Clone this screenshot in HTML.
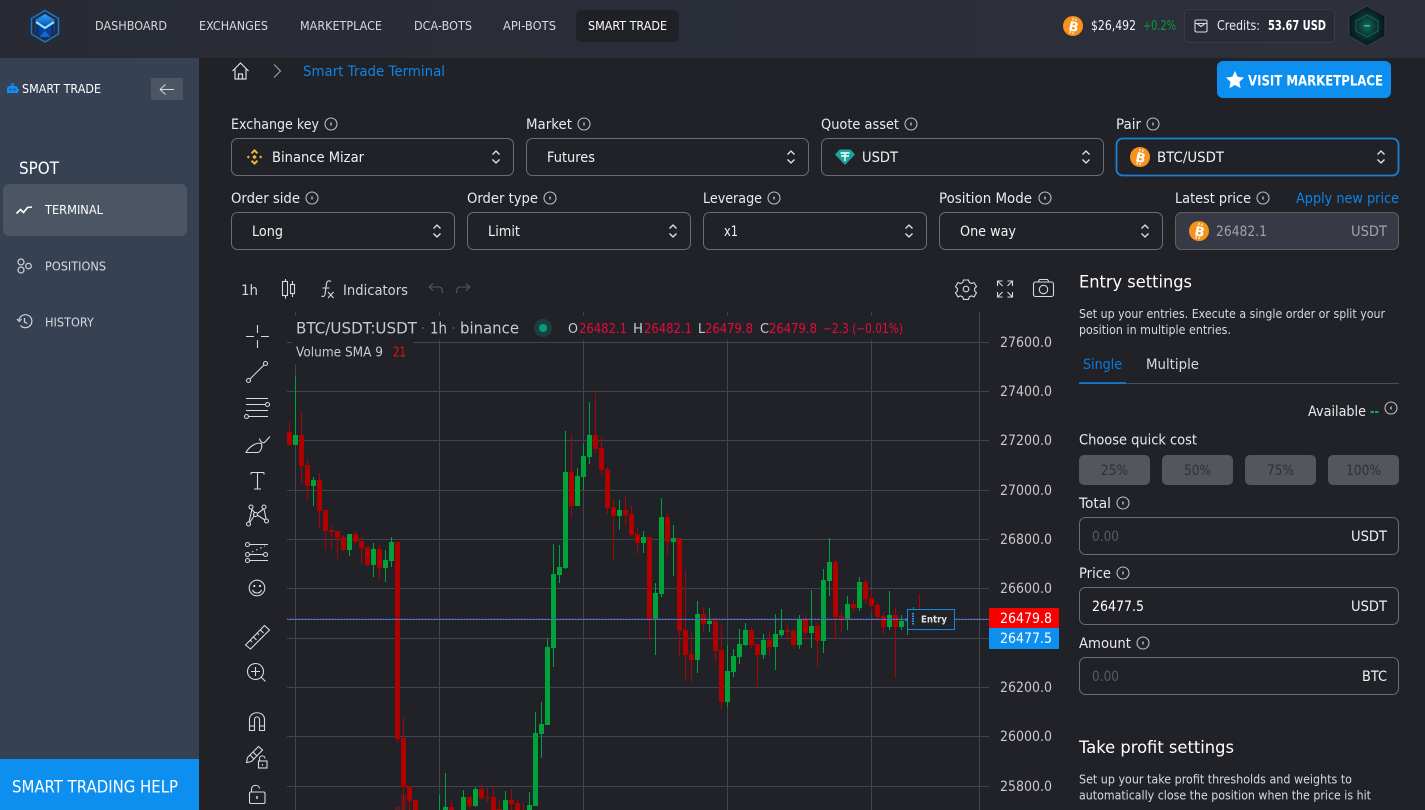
<!DOCTYPE html>
<html lang="en"><head><meta charset="utf-8"><title>Smart Trade Terminal</title>
<style>
html,body{margin:0;padding:0;background:#212228;width:1425px;height:810px;overflow:hidden}
svg{display:block}
text{font-family:"DejaVu Sans","Liberation Sans",sans-serif;font-size:14.5px;fill:#e8eaee;white-space:pre}
.ln{stroke:#6a6d76;fill:none;stroke-width:1}
.ic{fill:none;stroke:#d8dae0;stroke-width:1.1}
.nav{font-size:12.5px;fill:#d6d9de}
.side{font-size:12.5px;fill:#d6d9de}
.sel{font-size:14.5px;fill:#f0f1f4}
.lg{font-size:13.5px;fill:#e8083a}
.lk{font-size:13.5px;fill:#c8cad0}
.ax{font-size:14px;fill:#c8c8cc}
.sm{font-size:12.5px;fill:#d6d9de}
.q{font-size:14px;fill:#2f3138}
.ph{fill:#565c69}
</style></head><body>
<svg width="1425" height="810" viewBox="0 0 1425 810" xmlns="http://www.w3.org/2000/svg">
<defs>
<linearGradient id="hd" x1="0" x2="1" y1="0" y2="0"><stop offset="0" stop-color="#282b34"/><stop offset="1" stop-color="#2d303b"/></linearGradient>
<radialGradient id="av"><stop offset="0" stop-color="#126a5a"/><stop offset=".5" stop-color="#0a3533"/><stop offset="1" stop-color="#09161b"/></radialGradient>
<linearGradient id="lgb" x1="0" x2="0" y1="0" y2="1"><stop offset="0" stop-color="#2ea6ff"/><stop offset="1" stop-color="#0a4fb0"/></linearGradient>
<g id="i"><circle r="6" fill="none" stroke="#bcbec4" stroke-width="1.1"/><rect x="-.7" y="-1.5" width="1.4" height="3" fill="#bcbec4"/></g>
<g id="c"><path d="M-3.5-2.5 0-6l3.5 3.5M-3.5 2.5 0 6l3.5-3.5" fill="none" stroke="#e5e7eb" stroke-width="1.3"/></g>
<g id="b"><circle r="10" fill="#f7931a"/><g transform="rotate(12)"><text x="-4.2" y="5" style="font-size:13px;font-weight:700;fill:#fff">B</text><path d="M-1.5-8v2.5M1.5-8v2.5M-1.5 5.5V8M1.5 5.5V8" stroke="#fff" stroke-width="1.1"/></g></g>
</defs>

<rect width="1425" height="810" fill="#212228"/>

<!-- chart grid -->
<g stroke="#42434f" stroke-width="1" shape-rendering="crispEdges">
<path d="M287 342.5H989M287 391.5H989M287 440.5H989M287 490.5H989M287 539.5H989M287 588.5H989M287 638.5H989M287 687.5H989M287 736.5H989M287 786.5H989"/>
<path d="M295.5 312V810M439.5 312V810M583.5 312V810M727.5 312V810M871.5 312V810M979.5 312V810"/>
</g>
<!-- volume -->
<g fill="#5a1a20" shape-rendering="crispEdges"><rect x="401" y="795" width="5" height="15"/><rect x="395" y="807" width="5" height="3"/></g>
<!-- wicks -->
<path shape-rendering="crispEdges" fill="none" stroke="#00a33a" stroke-width="1" d="M295.5 376V445M313.5 477V506M349.5 534V556M373.5 543V577M385.5 550V582M391.5 537V567M439.5 795V810M445.5 773V810M463.5 790V810M475.5 787V807M505.5 791V810M529.5 792V810M535.5 712V806M541.5 702V758M547.5 638V725M553.5 544V667M559.5 545V583M565.5 431V569M577.5 468V506M583.5 444V490M589.5 402V464M619.5 500V530M643.5 531V553M655.5 583V655M661.5 498V597M673.5 525V576M697.5 601V673M709.5 608V632M727.5 645V707M733.5 649V677M739.5 629V664M745.5 623V646M763.5 634V659M775.5 614V670M781.5 609V637M799.5 615V649M811.5 590V648M823.5 569V653M829.5 538V596M847.5 596V630M859.5 577V611M889.5 591V630M901.5 615V630M907.5 618V635M913.5 607V620"/>
<path shape-rendering="crispEdges" fill="none" stroke="#b00000" stroke-width="1" d="M289.5 422V446M301.5 412V483M307.5 459V500M319.5 473V528M325.5 510V550M331.5 525V550M337.5 531V559M343.5 535V551M355.5 531V544M361.5 535V564M367.5 547V566M379.5 545V580M397.5 542V743M403.5 718V810M409.5 786V810M415.5 800V810M451.5 800V810M469.5 797V809M481.5 783V800M487.5 788V802M493.5 786V810M499.5 801V810M511.5 789V810M517.5 800V810M523.5 802V810M571.5 435V518M595.5 393V452M601.5 437V476M607.5 467V514M613.5 499V560M625.5 496V526M631.5 506V537M637.5 528V554M649.5 537V638M667.5 514V556M679.5 538V657M685.5 570V680M691.5 631V682M703.5 607V631M715.5 617V662M721.5 625V709M751.5 628V649M757.5 644V688M769.5 631V655M787.5 624V641M793.5 629V649M805.5 614V640M817.5 622V666M835.5 559V641M841.5 611V632M853.5 600V612M865.5 579V604M871.5 590V611M877.5 602V619M883.5 612V635M895.5 607V678M919.5 594V619"/>
<!-- bodies -->
<path shape-rendering="crispEdges" fill="none" stroke="#00a33a" stroke-width="5" d="M295.5 435V445M313.5 480V486M349.5 534V550M373.5 549V565M385.5 560V568M391.5 542V561M445.5 807V810M463.5 797V810M475.5 789V806M505.5 800V810M529.5 805V810M535.5 733V806M541.5 724V734M547.5 647V725M553.5 574V648M559.5 567V575M565.5 472V568M577.5 476V506M583.5 456V477M589.5 435V457M619.5 510V516M643.5 537V543M655.5 593V619M661.5 517V594M673.5 538V542M697.5 614V660M709.5 621V624M727.5 671V702M733.5 656V672M739.5 644V657M745.5 630V645M763.5 640V655M775.5 634V647M781.5 630V635M799.5 619V645M811.5 626V633M823.5 580V641M829.5 562V581M847.5 604V619M859.5 582V608M889.5 615V627M901.5 621V627M907.5 618V621"/>
<path shape-rendering="crispEdges" fill="none" stroke="#b00000" stroke-width="5" d="M289.5 432V445M301.5 435V466M307.5 465V486M319.5 480V511M325.5 510V531M331.5 530V532M337.5 531V538M343.5 537V550M355.5 534V542M361.5 541V548M367.5 547V565M379.5 549V568M397.5 542V739M403.5 738V787M409.5 786V801M415.5 800V810M451.5 807V810M469.5 797V806M481.5 789V798M487.5 797V798M493.5 797V810M499.5 809V810M511.5 800V804M517.5 803V810M571.5 472V506M595.5 435V449M601.5 448V470M607.5 469V508M613.5 507V516M625.5 510V515M631.5 514V535M637.5 534V543M649.5 537V619M667.5 517V542M679.5 538V631M685.5 630V655M691.5 654V660M703.5 614V624M715.5 621V651M721.5 650V702M751.5 630V645M757.5 644V655M769.5 640V647M787.5 630V632M793.5 631V645M805.5 619V633M817.5 626V641M835.5 562V617M841.5 616V619M853.5 604V608M865.5 582V599M871.5 598V606M877.5 605V617M883.5 616V627M895.5 615V627"/>
<!-- price lines -->
<path d="M287 618.5H989" stroke="#f00" stroke-width="1" stroke-dasharray="1 2" shape-rendering="crispEdges"/>
<path d="M287 619.5H989" stroke="#1587e0" stroke-width="1" shape-rendering="crispEdges"/>

<!-- legend masks -->
<rect x="292" y="316" width="612" height="24" fill="#212228"/>
<rect x="292" y="340" width="121" height="24" fill="#212228"/>
<rect x="287" y="316" width="5" height="25" fill="#212228"/>
<text x="296" y="333.5" textLength="121" lengthAdjust="spacingAndGlyphs" style="font-size:16px;fill:#c8cad0">BTC/USDT:USDT</text>
<text x="430" y="333.5" textLength="17" lengthAdjust="spacingAndGlyphs" style="font-size:16px;fill:#c8cad0">1h</text>
<text x="460" y="333.5" textLength="59" lengthAdjust="spacingAndGlyphs" style="font-size:16px;fill:#c8cad0">binance</text>
<circle cx="423" cy="328" r="1" fill="#555"/><circle cx="453.5" cy="328" r="1" fill="#555"/>
<circle cx="543" cy="328" r="9" fill="#089981" opacity=".25"/><circle cx="543" cy="328" r="4" fill="#089981"/>
<text class="lk" x="568" y="333" textLength="10" lengthAdjust="spacingAndGlyphs">O</text>
<text class="lg" x="579" y="333" textLength="48" lengthAdjust="spacingAndGlyphs">26482.1</text>
<text class="lk" x="633" y="333" textLength="10" lengthAdjust="spacingAndGlyphs">H</text>
<text class="lg" x="644" y="333" textLength="48" lengthAdjust="spacingAndGlyphs">26482.1</text>
<text class="lk" x="698" y="333" textLength="7" lengthAdjust="spacingAndGlyphs">L</text>
<text class="lg" x="705" y="333" textLength="48" lengthAdjust="spacingAndGlyphs">26479.8</text>
<text class="lk" x="760" y="333" textLength="9" lengthAdjust="spacingAndGlyphs">C</text>
<text class="lg" x="769" y="333" textLength="48" lengthAdjust="spacingAndGlyphs">26479.8</text>
<text class="lg" x="823" y="333" textLength="80" lengthAdjust="spacingAndGlyphs">−2.3 (−0.01%)</text>
<text x="296" y="356.5" textLength="87" lengthAdjust="spacingAndGlyphs" style="font-size:13px;fill:#c8cad0">Volume SMA 9</text>
<text x="393" y="356.5" textLength="13" lengthAdjust="spacingAndGlyphs" style="font-size:13.5px;fill:#e8101c">21</text>

<!-- axis -->
<text class="ax" x="1000" y="347" textLength="52" lengthAdjust="spacingAndGlyphs">27600.0</text>
<text class="ax" x="1000" y="396" textLength="52" lengthAdjust="spacingAndGlyphs">27400.0</text>
<text class="ax" x="1000" y="445" textLength="52" lengthAdjust="spacingAndGlyphs">27200.0</text>
<text class="ax" x="1000" y="495" textLength="52" lengthAdjust="spacingAndGlyphs">27000.0</text>
<text class="ax" x="1000" y="544" textLength="52" lengthAdjust="spacingAndGlyphs">26800.0</text>
<text class="ax" x="1000" y="593" textLength="52" lengthAdjust="spacingAndGlyphs">26600.0</text>
<text class="ax" x="1000" y="692" textLength="52" lengthAdjust="spacingAndGlyphs">26200.0</text>
<text class="ax" x="1000" y="741" textLength="52" lengthAdjust="spacingAndGlyphs">26000.0</text>
<text class="ax" x="1000" y="791" textLength="52" lengthAdjust="spacingAndGlyphs">25800.0</text>
<rect x="989" y="608" width="70" height="20" fill="#f80000"/>
<rect x="989" y="628" width="70" height="21" fill="#0d8ff0"/>
<text x="1000" y="623" textLength="52" lengthAdjust="spacingAndGlyphs" style="font-size:14px;fill:#fff">26479.8</text>
<text x="1000" y="643" textLength="52" lengthAdjust="spacingAndGlyphs" style="font-size:14px;fill:#fff">26477.5</text>
<!-- entry -->
<rect x="907.5" y="609.5" width="47" height="20" fill="#212228" stroke="#1587e0"/>
<path d="M913 613V625" stroke="#1d9bf5" stroke-width="2" stroke-dasharray="1.5 1" shape-rendering="crispEdges"/>
<text x="921" y="622.5" textLength="26" lengthAdjust="spacingAndGlyphs" style="font-size:10px;font-weight:700;fill:#e0e0e0">Entry</text>

<!-- chart toolbar -->
<text x="241" y="295" textLength="17" lengthAdjust="spacingAndGlyphs" style="fill:#d1d4dc">1h</text>
<g class="ic"><path d="M285.500 279v2M285.500 296v2.500M292.500 281v3M292.500 294v3"/><rect x="282.500" y="281.500" width="5" height="14"/><rect x="290.500" y="284.500" width="4" height="9"/></g>
<g class="ic"><path d="M331 281.500c-2-1.500-4-.5-4.500 2l-1.500 11c-.5 2-2 2.500-3.500 1.500M322.500 288h7M328 292l5.500 6M333.500 292l-5.500 6"/></g>
<text x="343" y="295" textLength="65" lengthAdjust="spacingAndGlyphs" style="fill:#d1d4dc">Indicators</text>
<g fill="none" stroke="#55575f" stroke-width="1.100"><path d="M429 287h10c2.500 0 3.500 2 3.500 6M429 287l4-3.500M429 287l4 3.500"/><path d="M470 287h-10c-2.500 0-3.500 2-3.500 6M470 287l-4-3.500M470 287l-4 3.500"/></g>
<g class="ic"><circle cx="966" cy="289" r="2.800"/><path d="M963.500 280h5l.8 2.500 2.200 1 2.500-1 2.500 4.200-1.900 1.800v2.400l1.900 1.800-2.500 4.200-2.500-1-2.200 1-.8 2.500h-5l-.8-2.500-2.200-1-2.500 1-2.500-4.200 1.900-1.800v-2.400l-1.900-1.800 2.500-4.200 2.500 1 2.200-1z"/></g>
<g class="ic"><path d="M997.500 286v-5h5M997.500 281l5 5M1012.500 286v-5h-5M1012.500 281l-5 5M997.500 292v5h5M997.500 297l5-5M1012.500 292v5h-5M1012.500 297l-5-5"/></g>
<g class="ic"><rect x="1033.500" y="282" width="20" height="14.500" rx="2"/><path d="M1038 282l1.500-2.500h8l1.500 2.500"/><circle cx="1043.500" cy="289.500" r="4.200"/></g>

<!-- left tools -->
<g class="ic">
<path d="M246 336.500h8M261 336.500h8M257.500 325v8M257.500 340v8"/>
<circle cx="248.500" cy="380.500" r="2"/><circle cx="265.500" cy="363.500" r="2"/><path d="M250 379l14-14"/>
<path d="M246 398.500h22M246 404.500h19M246 410.500h22M249 416.500h19"/><circle cx="267.500" cy="404.500" r="2"/><circle cx="246.500" cy="416.500" r="2"/>
<path d="M246 452.500h12c3-1 4.500-6 3.500-9-3-1-6 0-9 2-3 2-5 4-6.500 7z"/><path d="M259.500 438.500c.5 3 3 5 5 4l5.500-6"/>
<path d="M251 472.500h13M257.500 472.500v16.500M254 489h7M251 472.500v2M264 472.500v2"/>
<circle cx="251" cy="507" r="2"/><circle cx="264" cy="507" r="2"/><circle cx="248.500" cy="524" r="2"/><circle cx="266.500" cy="521" r="2"/><circle cx="255.500" cy="514.500" r="2"/>
<path d="M251.500 509l3.500 4M263.500 509l-6 4.500M250 522l4-6M257 515l8 5M252 509l-3 13M264 509l2 10"/>
<circle cx="247.500" cy="544.500" r="2"/><path d="M250 544.500h18"/>
<circle cx="247.500" cy="554.500" r="2"/><circle cx="265.500" cy="554.500" r="2"/><path d="M250 554.500h13"/>
<circle cx="247.500" cy="560.500" r="2"/><path d="M250 560.500h18"/>
<path d="M252 552l13-6" stroke-dasharray="1.500 3"/>
<circle cx="257" cy="588" r="7.800"/><circle cx="254.300" cy="586" r=".6"/><circle cx="260" cy="586" r=".6"/><path d="M252.500 590c1.500 4 7.500 4 9 0"/>
<path d="M245.500 645l19-19.500 5 4.500-19 19zM250 640l2 2M253.500 637l3 3M257 633l2 2M260.500 630l3 3"/>
<circle cx="255.500" cy="671.500" r="8"/><path d="M251 671.500h9M255.500 667v9M261.500 677.500l4 4"/>
<path d="M249.500 730.500v-11c0-9 15-9 15 0v11h-5v-11c0-3.500-5-3.500-5 0v11zM249.500 726h5M259.500 726h5"/>
<path d="M246.500 762.500l1-5 11-11 4 3.500-11 11.500zM250 755l4 4M253 752l4 4"/><rect x="258.500" y="761" width="8.500" height="7"/><path d="M259.500 761v-2.500c0-3.500 5.500-3.500 5.500 0"/><path d="M262.500 764v1.500"/>
<rect x="249.500" y="792" width="15.500" height="11.500" rx="1.500"/><path d="M251.500 792v-3c0-4.500 7.500-5 8-.5"/><path d="M257 796v3" stroke-width="1.500"/>
</g>

<!-- header -->
<rect width="1425" height="58" fill="url(#hd)"/>
<path d="M45 10.500 58.500 18.500V34L45 42 31.500 34V18.500z" fill="none" stroke="#1478d8" stroke-width="1.500"/>
<path d="M45 14 55 20v12l-10 6-10-6V20z" fill="#0a3f9c"/>
<path d="M45 14 55 20 45 27 35 20z" fill="url(#lgb)"/>
<path d="M36 22l9 6 9-6" fill="none" stroke="#8feaff" stroke-width="2"/>
<path d="M37.500 25v8M52.500 25v8" stroke="#0b2c66" stroke-width="2"/>
<path d="M39.500 37l5.500-6 5.500 6z" fill="#1268d8"/>
<rect x="576" y="10" width="103" height="32" rx="6" fill="#202127"/>
<text class="nav" x="95" y="30" textLength="72" lengthAdjust="spacingAndGlyphs">DASHBOARD</text>
<text class="nav" x="199" y="30" textLength="69" lengthAdjust="spacingAndGlyphs">EXCHANGES</text>
<text class="nav" x="300" y="30" textLength="82" lengthAdjust="spacingAndGlyphs">MARKETPLACE</text>
<text class="nav" x="414" y="30" textLength="58" lengthAdjust="spacingAndGlyphs">DCA-BOTS</text>
<text class="nav" x="503" y="30" textLength="53" lengthAdjust="spacingAndGlyphs">API-BOTS</text>
<text class="nav" x="588" y="30" textLength="79" lengthAdjust="spacingAndGlyphs" style="fill:#fff">SMART TRADE</text>
<use href="#b" x="1073" y="26"/>
<text x="1091" y="30" textLength="45" lengthAdjust="spacingAndGlyphs" style="font-size:13.5px;fill:#f4f4f4">$26,492</text>
<text x="1143" y="30" textLength="33" lengthAdjust="spacingAndGlyphs" style="font-size:13.5px;fill:#089c3a">+0.2%</text>
<rect x="1184.500" y="9.500" width="150" height="33" rx="4" fill="#292c36" stroke="#3a3d48"/>
<g class="ic"><rect x="1195" y="20" width="12" height="12" rx="1.500"/><path d="M1195 23.500h12M1197 23.500l4 3 4-3"/></g>
<text x="1217" y="30" textLength="43" lengthAdjust="spacingAndGlyphs" style="font-size:13px">Credits:</text>
<text x="1268" y="30" textLength="58" lengthAdjust="spacingAndGlyphs" style="font-size:13px;font-weight:700;fill:#fff">53.67 USD</text>
<path d="M1367 6l18 10v20l-18 10-18-10V16z" fill="url(#av)" stroke="#3a3f48"/>
<path d="M1367 15l11 6v10l-11 6-11-6V21z" fill="none" stroke="#14705c" stroke-width=".8"/>
<rect x="1364" y="25" width="6" height="1.500" fill="#25c49c"/>

<!-- sidebar -->
<rect x="0" y="58" width="199" height="701" fill="#364154"/>
<path d="M7 93v-4c0-2 1.500-3 3-3h1.500v-1.200h-.7v-1.300h3.400v1.300h-.7V86H15c1.500 0 3 1 3 3l1 0v2l-1 0v2z" fill="#0d8ff0"/>
<circle cx="10.500" cy="89.500" r="1" fill="#364154"/><circle cx="14.500" cy="89.500" r="1" fill="#364154"/>
<text x="22" y="93" textLength="79" lengthAdjust="spacingAndGlyphs" style="font-size:12.500px;fill:#fff">SMART TRADE</text>
<rect x="151" y="78" width="32" height="22" fill="#4b5563"/>
<path d="M174 89.500h-14M160 89.500l5.500-5M160 89.500l5.500 5" fill="none" stroke="#d8dae0" stroke-width="1"/>
<text x="19" y="174" textLength="40" lengthAdjust="spacingAndGlyphs" style="font-size:16.500px;fill:#fff">SPOT</text>
<rect x="3" y="184" width="184" height="52" rx="6" fill="#4b5563"/>
<path d="M16.500 213.500l4-4 3 3 4-5 4.500 -.5" fill="none" stroke="#fff" stroke-width="1.600"/>
<text class="side" x="45" y="214" textLength="58" lengthAdjust="spacingAndGlyphs" style="fill:#fff">TERMINAL</text>
<g fill="none" stroke="#d1d5db" stroke-width="1.200"><circle cx="21" cy="262" r="3"/><circle cx="21" cy="270" r="3"/><circle cx="28.500" cy="266" r="2.800"/></g>
<text class="side" x="45" y="270.500" textLength="61" lengthAdjust="spacingAndGlyphs">POSITIONS</text>
<g fill="none" stroke="#d1d5db" stroke-width="1.200"><path d="M19 320a6.500 6.500 0 1 1 1.500 5.500M17 319l2.200 2.500 2.300-2.500M24.500 318v4l2.800 1.500"/></g>
<text class="side" x="45" y="326.500" textLength="49" lengthAdjust="spacingAndGlyphs">HISTORY</text>
<rect x="0" y="759" width="199" height="51" fill="#0d8ff0"/>
<text x="12" y="792.500" textLength="166" lengthAdjust="spacingAndGlyphs" style="font-size:16.500px;fill:#fff">SMART TRADING HELP</text>

<!-- breadcrumb -->
<g fill="none" stroke="#d8dae0" stroke-width="1.200"><path d="M232.500 71l8-8 8 8M235 69v10h11V69M238.500 79v-5h4v5"/></g>
<path d="M274 64.500l6.500 6.500-6.500 6.500" fill="none" stroke="#9ca3af" stroke-width="1.100"/>
<text x="303" y="76" textLength="142" lengthAdjust="spacingAndGlyphs" style="font-size:14px;fill:#0d84e6">Smart Trade Terminal</text>
<rect x="1217" y="61" width="174" height="37" rx="6" fill="#0d8ff0"/>
<path d="M1235 71l2.700 5.800 6.300.8-4.600 4.300 1.200 6.200-5.600-3.100-5.600 3.100 1.200-6.200-4.600-4.300 6.300-.8z" fill="#fff"/>
<text x="1248" y="85.500" textLength="135" lengthAdjust="spacingAndGlyphs" style="font-size:14px;font-weight:700;fill:#fff">VISIT MARKETPLACE</text>

<!-- row 1 -->
<text x="231" y="129" textLength="88" lengthAdjust="spacingAndGlyphs">Exchange key</text><use href="#i" x="331" y="124"/>
<text x="526" y="129" textLength="46" lengthAdjust="spacingAndGlyphs">Market</text><use href="#i" x="584" y="124"/>
<text x="821" y="129" textLength="78" lengthAdjust="spacingAndGlyphs">Quote asset</text><use href="#i" x="911" y="124"/>
<text x="1116" y="129" textLength="25" lengthAdjust="spacingAndGlyphs">Pair</text><use href="#i" x="1153" y="124"/>
<rect class="ln" x="231.500" y="138.500" width="282" height="37" rx="6"/>
<rect class="ln" x="526.500" y="138.500" width="282" height="37" rx="6"/>
<rect class="ln" x="821.500" y="138.500" width="282" height="37" rx="6"/>
<rect x="1116.500" y="138.500" width="282" height="37" rx="6" fill="none" stroke="#1a80d0" stroke-width="1.800"/>
<path d="M254.500 149l3.600 3.600-1.400 1.400-2.200-2.200-2.200 2.200-1.400-1.400zM254.500 165l-3.600-3.600 1.400-1.400 2.200 2.200 2.200-2.200 1.400 1.400zM254.500 154.800l2.200 2.200-2.200 2.200-2.200-2.200zM248.300 155.500l1.500 1.500-1.500 1.500-1.500-1.500zM260.700 155.500l1.500 1.500-1.500 1.500-1.500-1.500z" fill="#f3ba2f"/>
<text class="sel" x="272" y="162" textLength="92" lengthAdjust="spacingAndGlyphs">Binance Mizar</text>
<text class="sel" x="547" y="162" textLength="48" lengthAdjust="spacingAndGlyphs">Futures</text>
<path d="M839.500 149.500h11l4.500 5-10 10.500-10-10.500z" fill="#1ba39c"/>
<path d="M840.500 153h9M845 153v8M841 156h8" stroke="#fff" stroke-width="1.400"/>
<text class="sel" x="862" y="162" textLength="36" lengthAdjust="spacingAndGlyphs">USDT</text>
<use href="#b" x="1140" y="157"/>
<text class="sel" x="1157" y="162" textLength="67" lengthAdjust="spacingAndGlyphs">BTC/USDT</text>
<use href="#c" x="496" y="157"/><use href="#c" x="791" y="157"/><use href="#c" x="1086" y="157"/><use href="#c" x="1381" y="157"/>

<!-- row 2 -->
<text x="231" y="203" textLength="69" lengthAdjust="spacingAndGlyphs">Order side</text><use href="#i" x="312" y="198"/>
<text x="467" y="203" textLength="71" lengthAdjust="spacingAndGlyphs">Order type</text><use href="#i" x="550" y="198"/>
<text x="703" y="203" textLength="59" lengthAdjust="spacingAndGlyphs">Leverage</text><use href="#i" x="774" y="198"/>
<text x="939" y="203" textLength="93" lengthAdjust="spacingAndGlyphs">Position Mode</text><use href="#i" x="1045" y="198"/>
<text x="1175" y="203" textLength="76" lengthAdjust="spacingAndGlyphs">Latest price</text><use href="#i" x="1263" y="198"/>
<text x="1296" y="203" textLength="103" lengthAdjust="spacingAndGlyphs" style="fill:#0d84e6">Apply new price</text>
<rect class="ln" x="231.500" y="212.500" width="223" height="37" rx="6"/>
<rect class="ln" x="467.500" y="212.500" width="223" height="37" rx="6"/>
<rect class="ln" x="703.500" y="212.500" width="223" height="37" rx="6"/>
<rect class="ln" x="939.500" y="212.500" width="223" height="37" rx="6"/>
<rect x="1175.500" y="212.500" width="223" height="37" rx="6" fill="#373a44" stroke="#5e6169"/>
<text class="sel" x="252" y="236" textLength="31" lengthAdjust="spacingAndGlyphs">Long</text>
<text class="sel" x="488" y="236" textLength="32" lengthAdjust="spacingAndGlyphs">Limit</text>
<text class="sel" x="724" y="236" textLength="14" lengthAdjust="spacingAndGlyphs">x1</text>
<text class="sel" x="960" y="236" textLength="56" lengthAdjust="spacingAndGlyphs">One way</text>
<use href="#b" x="1199" y="231"/>
<text x="1216" y="236" textLength="51" lengthAdjust="spacingAndGlyphs" style="fill:#9ca3af">26482.1</text>
<text x="1351" y="236" textLength="36" lengthAdjust="spacingAndGlyphs" style="fill:#9ca3af">USDT</text>
<use href="#c" x="437" y="231"/><use href="#c" x="673" y="231"/><use href="#c" x="909" y="231"/><use href="#c" x="1145" y="231"/>

<!-- right panel -->
<text x="1079" y="287.500" textLength="113" lengthAdjust="spacingAndGlyphs" style="font-size:16.500px;fill:#fff">Entry settings</text>
<text class="sm" x="1079" y="318" textLength="306" lengthAdjust="spacingAndGlyphs">Set up your entries. Execute a single order or split your</text>
<text class="sm" x="1079" y="334" textLength="152" lengthAdjust="spacingAndGlyphs">position in multiple entries.</text>
<text x="1083" y="369" textLength="39" lengthAdjust="spacingAndGlyphs" style="fill:#0b78dc">Single</text>
<text x="1146" y="369" textLength="53" lengthAdjust="spacingAndGlyphs" style="fill:#d6d9de">Multiple</text>
<path d="M1079 383.500H1399" stroke="#4b4d58"/>
<path d="M1079 383H1126" stroke="#0d84e6" stroke-width="1.500"/>
<text x="1308" y="416" textLength="58" lengthAdjust="spacingAndGlyphs">Available</text>
<text x="1370" y="416" textLength="9" lengthAdjust="spacingAndGlyphs" style="font-weight:700;fill:#00b84a">--</text>
<use href="#i" x="1391" y="408"/>
<text x="1079" y="444.500" textLength="118" lengthAdjust="spacingAndGlyphs">Choose quick cost</text>
<g fill="#54565d"><rect x="1079" y="455" width="71" height="30" rx="5"/><rect x="1162" y="455" width="71" height="30" rx="5"/><rect x="1245" y="455" width="71" height="30" rx="5"/><rect x="1328" y="455" width="71" height="30" rx="5"/></g>
<text class="q" x="1101" y="475" textLength="27" lengthAdjust="spacingAndGlyphs">25%</text>
<text class="q" x="1184" y="475" textLength="27" lengthAdjust="spacingAndGlyphs">50%</text>
<text class="q" x="1267" y="475" textLength="27" lengthAdjust="spacingAndGlyphs">75%</text>
<text class="q" x="1346" y="475" textLength="35" lengthAdjust="spacingAndGlyphs">100%</text>
<text x="1079" y="508" textLength="32" lengthAdjust="spacingAndGlyphs">Total</text><use href="#i" x="1123" y="503"/>
<rect class="ln" x="1079.500" y="517.500" width="319" height="37" rx="6"/>
<text class="ph" x="1092" y="541" textLength="27" lengthAdjust="spacingAndGlyphs">0.00</text>
<text class="sel" x="1351" y="541" textLength="36" lengthAdjust="spacingAndGlyphs">USDT</text>
<text x="1079" y="578" textLength="32" lengthAdjust="spacingAndGlyphs">Price</text><use href="#i" x="1123" y="573"/>
<rect class="ln" x="1079.500" y="587.500" width="319" height="37" rx="6"/>
<text x="1092" y="611" textLength="52" lengthAdjust="spacingAndGlyphs" style="fill:#fff">26477.5</text>
<text class="sel" x="1351" y="611" textLength="36" lengthAdjust="spacingAndGlyphs">USDT</text>
<text x="1079" y="648" textLength="52" lengthAdjust="spacingAndGlyphs">Amount</text><use href="#i" x="1143" y="643"/>
<rect class="ln" x="1079.500" y="657.500" width="319" height="37" rx="6"/>
<text class="ph" x="1092" y="681" textLength="27" lengthAdjust="spacingAndGlyphs">0.00</text>
<text class="sel" x="1362" y="681" textLength="25" lengthAdjust="spacingAndGlyphs">BTC</text>
<text x="1079" y="753" textLength="155" lengthAdjust="spacingAndGlyphs" style="font-size:17px;fill:#fff">Take profit settings</text>
<text class="sm" x="1079" y="783.500" textLength="273" lengthAdjust="spacingAndGlyphs">Set up your take profit thresholds and weights to</text>
<text class="sm" x="1079" y="799.500" textLength="292" lengthAdjust="spacingAndGlyphs">automatically close the position when the price is hit</text>
</svg>
</body></html>
